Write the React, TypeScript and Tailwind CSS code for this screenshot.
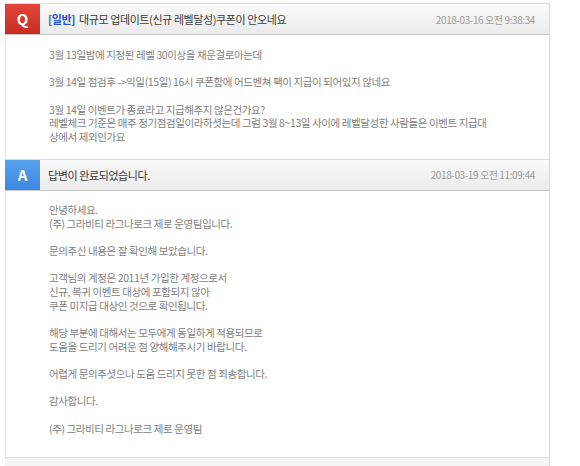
import React from "react";

const font = { fontFamily: '"Noto Sans CJK KR", "Noto Sans", sans-serif' };

function Header({ badge, color, children, date }: { badge: string; color: string; children: React.ReactNode; date: string }) {
  return (
    <div className="flex h-[32px] items-stretch border-t border-b border-t-[#dcdcdc] border-b-[#c6c6c6] bg-gradient-to-b from-[#fafafa] to-[#ebebeb]">
      <div className={`flex w-[35px] items-center justify-center text-[15px] font-bold text-white ${color}`}>{badge}</div>
      <div className="flex flex-1 items-center pl-[8px] text-[11px] font-normal tracking-[-0.4px] text-[#3a3a3a]">{children}</div>
      <div className="flex items-center pr-[14px] text-[10px] tracking-[-0.4px] text-[#9a9a9a]">{date}</div>
    </div>
  );
}

export default function App() {
  const q = [
    "3월 13일밤에 지정된 레벨 30이상을 채운걸로아는데",
    "",
    "3월 14일 점검후 ->익일(15일) 16시 쿠폰함에 어드벤쳐 팩이 지급이 되어있지 않네요",
    "",
    "3월 14일 이벤트가 종료라고 지급해주지 않은건가요?",
    "레벨체크 기준은 매주 정기점검일이라하셧는데 그럼 3월 8~13일 사이에 레벨달성한 사람들은 이벤트 지급대",
    "상에서 제외인가요",
  ];
  const a = [
    "안녕하세요.",
    "(주) 그라비티 라그나로크 제로 운영팀입니다.",
    "",
    "문의주신 내용은 잘 확인해 보았습니다.",
    "",
    "고객님의 계정은 2011년 가입한 계정으로서",
    "신규, 복귀 이벤트 대상에 포함되지 않아",
    "쿠폰 미지급 대상인 것으로 확인됩니다.",
    "",
    "해당 부분에 대해서는 모두에게 동일하게 적용되므로",
    "도움을 드리기 어려운 점 양해해주시기 바랍니다.",
    "",
    "어렵게 문의주셧으나 도움 드리지 못한 점 죄송합니다.",
    "",
    "감사합니다.",
    "",
    "(주) 그라비티 라그나로크 제로 운영팀",
  ];
  return (
    <div className="h-[466px] w-[580px] overflow-hidden bg-white" style={font}>
      <div className="ml-[5px] mt-[3px] w-[545px] border-r border-[#dcdcdc]">
        <Header badge="Q" color="bg-gradient-to-b from-[#e0463a] to-[#c92b22]" date="2018-03-16 오전 9:38:34">
          <span className="mr-[4px] font-bold text-[#1d4fd8]">[일반]</span>
          대규모 업데이트(신규 레벨달성)쿠폰이 안오네요
        </Header>
        <div className="border-l border-[#e6e6e6] pb-[15px] pl-[43px] pt-[13px] text-[10.5px] leading-[13.7px] tracking-[-0.4px] text-[#808080]">
          {q.map((l, i) => (
            <div key={i} className="h-[13.7px] whitespace-nowrap">{l}</div>
          ))}
        </div>
        <Header badge="A" color="bg-gradient-to-b from-[#5aa2ef] to-[#3d86e0]" date="2018-03-19 오전 11:09:44">
          답변이 완료되었습니다.
        </Header>
        <div className="border-l border-[#e6e6e6] pb-[21px] pl-[43px] pt-[12px] text-[10.5px] leading-[13.7px] tracking-[-0.4px] text-[#808080]">
          {a.map((l, i) => (
            <div key={i} className="h-[13.7px] whitespace-nowrap">{l}</div>
          ))}
        </div>
        <div className="h-[20px] border-t border-[#e2e2e2] bg-[#f4f4f4]" />
      </div>
    </div>
  );
}
